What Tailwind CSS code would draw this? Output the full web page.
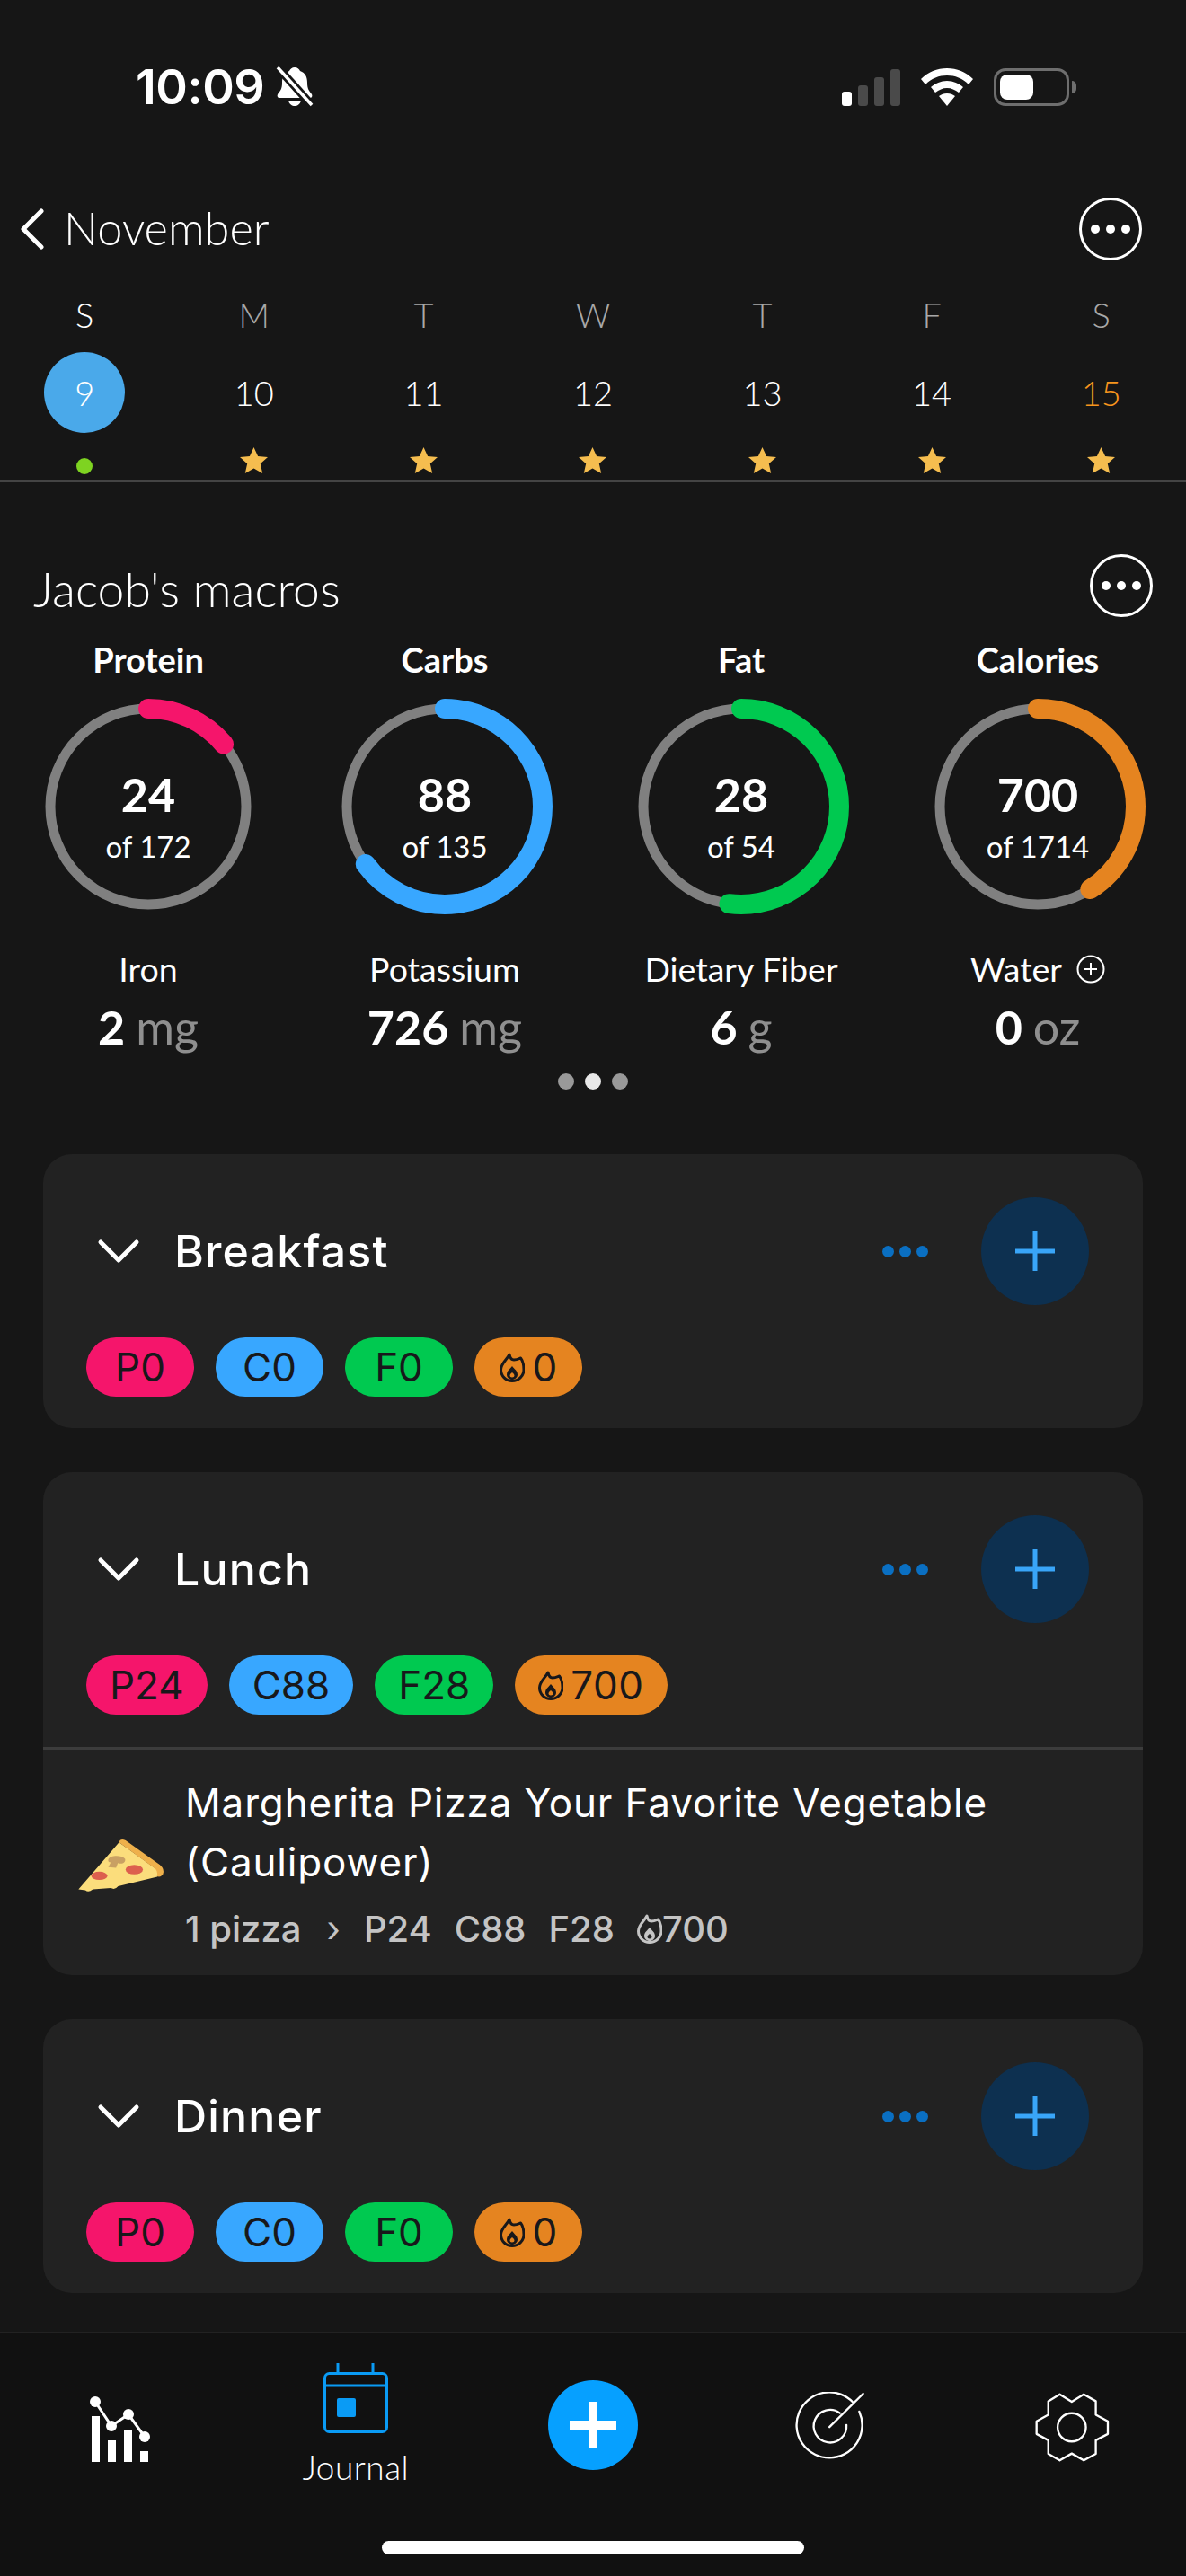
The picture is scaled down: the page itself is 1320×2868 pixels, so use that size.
<!DOCTYPE html>
<html lang="en">
  <head>
    <meta charset="UTF-8" />
    <meta name="viewport" content="width=device-width, initial-scale=1.0" />
    <script src="https://cdn.jsdelivr.net/npm/@tailwindcss/browser@4"></script>
    <title>Journal</title>
  </head>
  <body class="bg-[#161616]">
    <div class="w-[1320px] h-[2868px] flex flex-col bg-[#161616] text-white font-['Lato',sans-serif] overflow-hidden">
      <!-- Status bar -->
      <div class="h-[194px] shrink-0 flex items-center justify-between pl-[151px] pr-[122px]">
        <div class="flex items-center gap-[13px]">
          <span class="font-['Inter',sans-serif] font-semibold text-[54px] leading-none tracking-[-0.5px]">10:09</span>
          <svg class="w-[42px] h-[46px]" viewBox="0 0 42 46">
            <path d="M21 1c3 0 5 2 6 4 6 2 8 7 8 13 0 7 2 9 5 13 1 2 0 4-2 4H4c-2 0-3-2-2-4 3-4 5-6 5-13 0-6 2-11 8-13 1-2 3-4 6-4z" fill="#fff" />
            <path d="M14 38h14c-1 4-4 6-7 6s-6-2-7-6z" fill="#fff" />
            <path d="M3 2l36 40" stroke="#161616" stroke-width="9" />
            <path d="M2 1l38 42" stroke="#fff" stroke-width="3.5" />
          </svg>
        </div>
        <div class="flex items-center gap-[23px]">
          <div class="flex items-end gap-[7px] h-[41px]">
            <div class="w-[11px] h-[16px] rounded-[3px] bg-white"></div>
            <div class="w-[11px] h-[23px] rounded-[3px] bg-[#4a4a4a]"></div>
            <div class="w-[11px] h-[32px] rounded-[3px] bg-[#4a4a4a]"></div>
            <div class="w-[11px] h-[41px] rounded-[3px] bg-[#4a4a4a]"></div>
          </div>
          <svg class="w-[58px] h-[42px]" viewBox="0 0 58 42">
            <path d="M29 0c11 0 21 4 29 12l-5 6C46 11 38 8 29 8S12 11 5 18l-5-6C8 4 18 0 29 0z" fill="#fff" />
            <path d="M29 14c7 0 13 3 18 7l-5 6c-4-3-8-5-13-5s-9 2-13 5l-5-6c5-4 11-7 18-7z" fill="#fff" />
            <path d="M29 28c4 0 6 1 9 3L29 42 20 31c3-2 5-3 9-3z" fill="#fff" />
          </svg>
          <div class="flex items-center gap-[3px]">
            <div class="w-[84px] h-[42px] rounded-[13px] border-[3px] border-[#6e6e6e] p-[4px]">
              <div class="w-[37px] h-full rounded-[8px] bg-white"></div>
            </div>
            <div class="w-[5px] h-[14px] rounded-r-full bg-[#6e6e6e]"></div>
          </div>
        </div>
      </div>

      <!-- Month header -->
      <div class="h-[122px] shrink-0 flex items-center justify-between pl-[22px] pr-[49px]">
        <div class="flex items-center gap-[22px]">
          <svg class="w-[27px] h-[46px]" viewBox="0 0 27 46" fill="none" stroke="#fff" stroke-width="5" stroke-linecap="round" stroke-linejoin="round">
            <path d="M24 3L4 23l20 20" />
          </svg>
          <span class="font-light text-[50.5px] leading-none mb-[2px]">November</span>
        </div>
        <svg class="w-[70px] h-[70px]" viewBox="0 0 70 70">
          <circle cx="35" cy="35" r="33.5" fill="none" stroke="#fff" stroke-width="3" />
          <circle cx="18" cy="35" r="5" fill="#fff" /><circle cx="35" cy="35" r="5" fill="#fff" /><circle cx="52" cy="35" r="5" fill="#fff" />
        </svg>
      </div>

      <!-- Week strip -->
      <div class="grid grid-cols-7 h-[68px] shrink-0 items-center text-center text-[38px] font-light text-[#a8a8a8]">
        <span class="text-white">S</span><span>M</span><span>T</span><span>W</span><span>T</span><span>F</span><span>S</span>
      </div>
      <div class="grid grid-cols-7 h-[106px] shrink-0 items-center justify-items-center text-[38px] font-light">
        <div class="w-[90px] h-[90px] rounded-full bg-[#4aa9ea] flex items-center justify-center">9</div>
        <span>10</span><span>11</span><span>12</span><span>13</span><span>14</span><span class="text-[#f7951d]">15</span>
      </div>
      <div class="grid grid-cols-7 h-[44px] shrink-0 items-center justify-items-center">
        <div class="w-[18px] h-[18px] mt-[14px] rounded-full bg-[#7ed321]"></div>
        <svg class="w-[31px] h-[29px]" viewBox="0 0 31 29"><path d="M15.5 0l4.6 10 10.9 1.1-8.2 7.2 2.4 10.7-9.7-5.6L5.8 29l2.4-10.7L0 11.1 10.9 10z" fill="#f5bd4f" /></svg>
        <svg class="w-[31px] h-[29px]" viewBox="0 0 31 29"><path d="M15.5 0l4.6 10 10.9 1.1-8.2 7.2 2.4 10.7-9.7-5.6L5.8 29l2.4-10.7L0 11.1 10.9 10z" fill="#f5bd4f" /></svg>
        <svg class="w-[31px] h-[29px]" viewBox="0 0 31 29"><path d="M15.5 0l4.6 10 10.9 1.1-8.2 7.2 2.4 10.7-9.7-5.6L5.8 29l2.4-10.7L0 11.1 10.9 10z" fill="#f5bd4f" /></svg>
        <svg class="w-[31px] h-[29px]" viewBox="0 0 31 29"><path d="M15.5 0l4.6 10 10.9 1.1-8.2 7.2 2.4 10.7-9.7-5.6L5.8 29l2.4-10.7L0 11.1 10.9 10z" fill="#f5bd4f" /></svg>
        <svg class="w-[31px] h-[29px]" viewBox="0 0 31 29"><path d="M15.5 0l4.6 10 10.9 1.1-8.2 7.2 2.4 10.7-9.7-5.6L5.8 29l2.4-10.7L0 11.1 10.9 10z" fill="#f5bd4f" /></svg>
        <svg class="w-[31px] h-[29px]" viewBox="0 0 31 29"><path d="M15.5 0l4.6 10 10.9 1.1-8.2 7.2 2.4 10.7-9.7-5.6L5.8 29l2.4-10.7L0 11.1 10.9 10z" fill="#f5bd4f" /></svg>
      </div>
      <div class="h-[3px] shrink-0 bg-[#444444]"></div>

      <!-- Macros -->
      <div class="h-[90px] mt-[75px] shrink-0 flex items-center justify-between pl-[37px] pr-[37px]">
        <span class="font-light text-[53.5px] leading-none mb-[2px]">Jacob's macros</span>
        <svg class="w-[70px] h-[70px] mb-[10px]" viewBox="0 0 70 70">
          <circle cx="35" cy="35" r="33.5" fill="none" stroke="#fff" stroke-width="3" />
          <circle cx="18" cy="35" r="5" fill="#fff" /><circle cx="35" cy="35" r="5" fill="#fff" /><circle cx="52" cy="35" r="5" fill="#fff" />
        </svg>
      </div>

      <div class="grid grid-cols-4 mt-[8px] shrink-0 text-center">
        <div class="flex flex-col items-center">
          <div class="h-[48px] mb-[2px] flex items-center font-bold text-[38px] leading-none">Protein</div>
          <div class="relative w-[240px] h-[240px] mt-[18px]">
            <svg class="w-full h-full -rotate-90" viewBox="0 0 240 240" fill="none">
              <circle cx="120" cy="120" r="109" stroke="#808080" stroke-width="11" />
              <circle cx="120" cy="120" r="109" stroke="#f5156b" stroke-width="22" stroke-linecap="round" pathLength="100" stroke-dasharray="14 100" />
            </svg>
            <div class="absolute inset-0 flex flex-col items-center pt-[81px]">
              <span class="font-bold text-[52px] leading-[50px]">24</span>
              <span class="text-[33px] leading-[40px] mt-[13px]">of 172</span>
            </div>
          </div>
          <div class="h-[44px] mt-[39px] flex items-center text-[37.5px] leading-none">Iron</div>
          <div class="h-[60px] mt-[12px] flex items-baseline gap-[12px] text-[52px] leading-[60px]"><span class="font-bold">2</span><span class="text-[#8f8f8f]">mg</span></div>
        </div>
        <div class="flex flex-col items-center">
          <div class="h-[48px] mb-[2px] flex items-center font-bold text-[38px] leading-none">Carbs</div>
          <div class="relative w-[240px] h-[240px] mt-[18px]">
            <svg class="w-full h-full -rotate-90" viewBox="0 0 240 240" fill="none">
              <circle cx="120" cy="120" r="109" stroke="#808080" stroke-width="11" />
              <circle cx="120" cy="120" r="109" stroke="#38a7ff" stroke-width="22" stroke-linecap="round" pathLength="100" stroke-dasharray="65 100" />
            </svg>
            <div class="absolute inset-0 flex flex-col items-center pt-[81px]">
              <span class="font-bold text-[52px] leading-[50px]">88</span>
              <span class="text-[33px] leading-[40px] mt-[13px]">of 135</span>
            </div>
          </div>
          <div class="h-[44px] mt-[39px] flex items-center text-[37.5px] leading-none">Potassium</div>
          <div class="h-[60px] mt-[12px] flex items-baseline gap-[12px] text-[52px] leading-[60px]"><span class="font-bold">726</span><span class="text-[#8f8f8f]">mg</span></div>
        </div>
        <div class="flex flex-col items-center">
          <div class="h-[48px] mb-[2px] flex items-center font-bold text-[38px] leading-none">Fat</div>
          <div class="relative w-[240px] h-[240px] mt-[18px]">
            <svg class="w-full h-full -rotate-90" viewBox="0 0 240 240" fill="none">
              <circle cx="120" cy="120" r="109" stroke="#808080" stroke-width="11" />
              <circle cx="120" cy="120" r="109" stroke="#00c950" stroke-width="22" stroke-linecap="round" pathLength="100" stroke-dasharray="52 100" />
            </svg>
            <div class="absolute inset-0 flex flex-col items-center pt-[81px]">
              <span class="font-bold text-[52px] leading-[50px]">28</span>
              <span class="text-[33px] leading-[40px] mt-[13px]">of 54</span>
            </div>
          </div>
          <div class="h-[44px] mt-[39px] flex items-center text-[37.5px] leading-none">Dietary Fiber</div>
          <div class="h-[60px] mt-[12px] flex items-baseline gap-[12px] text-[52px] leading-[60px]"><span class="font-bold">6</span><span class="text-[#8f8f8f]">g</span></div>
        </div>
        <div class="flex flex-col items-center">
          <div class="h-[48px] mb-[2px] flex items-center font-bold text-[38px] leading-none">Calories</div>
          <div class="relative w-[240px] h-[240px] mt-[18px]">
            <svg class="w-full h-full -rotate-90" viewBox="0 0 240 240" fill="none">
              <circle cx="120" cy="120" r="109" stroke="#808080" stroke-width="11" />
              <circle cx="120" cy="120" r="109" stroke="#e58420" stroke-width="22" stroke-linecap="round" pathLength="100" stroke-dasharray="41 100" />
            </svg>
            <div class="absolute inset-0 flex flex-col items-center pt-[81px]">
              <span class="font-bold text-[52px] leading-[50px]">700</span>
              <span class="text-[33px] leading-[40px] mt-[13px]">of 1714</span>
            </div>
          </div>
          <div class="h-[44px] mt-[39px] flex items-center gap-[16px] text-[37.5px] leading-none">Water
            <svg class="w-[32px] h-[32px]" viewBox="0 0 32 32" fill="none" stroke="#fff" stroke-width="2"><circle cx="16" cy="16" r="14.5" /><path d="M16 9v14M9 16h14" /></svg>
          </div>
          <div class="h-[60px] mt-[12px] flex items-baseline gap-[12px] text-[52px] leading-[60px]"><span class="font-bold">0</span><span class="text-[#8f8f8f]">oz</span></div>
        </div>
      </div>

      <div class="flex justify-center gap-[12px] mt-[22px] shrink-0">
        <div class="w-[18px] h-[18px] rounded-full bg-[#999999]"></div>
        <div class="w-[18px] h-[18px] rounded-full bg-[#e8e8e8]"></div>
        <div class="w-[18px] h-[18px] rounded-full bg-[#999999]"></div>
      </div>

      <!-- Meals -->
      <div class="flex flex-col gap-[49px] mx-[48px] mt-[72px] shrink-0 font-['Inter',sans-serif] text-[#18181b]">
        <div class="bg-[#222222] rounded-[32px] h-[305px] pt-[48px]">
          <div class="flex items-center h-[120px] pl-[60px] pr-[60px]">
            <svg class="w-[48px] h-[30px]" viewBox="0 0 48 30" fill="none" stroke="#fff" stroke-width="5" stroke-linecap="round" stroke-linejoin="round"><path d="M4 5l20 20L44 5" /></svg>
            <span class="ml-[38px] text-white font-medium text-[50px] leading-none tracking-[1.2px]">Breakfast</span>
            <div class="ml-auto flex gap-[6px]"><div class="w-[13px] h-[13px] rounded-full bg-[#0a6fc2]"></div><div class="w-[13px] h-[13px] rounded-full bg-[#0a6fc2]"></div><div class="w-[13px] h-[13px] rounded-full bg-[#0a6fc2]"></div></div>
            <div class="ml-[59px] w-[120px] h-[120px] rounded-full bg-[#0d3050] flex items-center justify-center">
              <svg class="w-[44px] h-[44px]" viewBox="0 0 44 44" stroke="#39a5f8" stroke-width="5"><path d="M22 0v44M0 22h44" /></svg>
            </div>
          </div>
          <div class="flex gap-[24px] pl-[48px] mt-[36px] text-[44px] leading-none">
            <div class="h-[66px] min-w-[120px] px-[26px] rounded-full bg-[#f5156b] flex items-center justify-center">P0</div>
            <div class="h-[66px] min-w-[120px] px-[26px] rounded-full bg-[#38a7ff] flex items-center justify-center">C0</div>
            <div class="h-[66px] min-w-[120px] px-[26px] rounded-full bg-[#00c950] flex items-center justify-center">F0</div>
            <div class="h-[66px] min-w-[120px] px-[26px] rounded-full bg-[#e58420] flex items-center justify-center gap-[9px]">
              <svg class="w-[28px] h-[33px]" viewBox="0 0 28 33" fill="none" stroke="#18181b" stroke-width="3" stroke-linejoin="round"><path d="M11 2c.5 3 2 6 5 6 3 0 5-1 7.500-2 2.500 3 3.500 8 3.500 13 0 7-6 12.500-13 12.500S1.500 26 1.500 19C1.500 12 8 8 11 2z" /><path d="M14 15c2 3 6 5 6 9.500 0 3-3 5.500-6 5.500s-6-2.500-6-5.500c0-4.500 4-6.500 6-9.500z" fill="#18181b" stroke="none" /><path d="M14 22c1 1 2.500 2 2.500 3.500 0 1-1 2-2.500 2s-2.500-1-2.500-2c0-1.500 1.500-2.500 2.500-3.500z" fill="#e58420" stroke="none" /></svg>
              <span>0</span>
            </div>
          </div>
        </div>

        <div class="bg-[#222222] rounded-[32px] h-[560px] pt-[48px]">
          <div class="flex items-center h-[120px] pl-[60px] pr-[60px]">
            <svg class="w-[48px] h-[30px]" viewBox="0 0 48 30" fill="none" stroke="#fff" stroke-width="5" stroke-linecap="round" stroke-linejoin="round"><path d="M4 5l20 20L44 5" /></svg>
            <span class="ml-[38px] text-white font-medium text-[50px] leading-none tracking-[1.2px]">Lunch</span>
            <div class="ml-auto flex gap-[6px]"><div class="w-[13px] h-[13px] rounded-full bg-[#0a6fc2]"></div><div class="w-[13px] h-[13px] rounded-full bg-[#0a6fc2]"></div><div class="w-[13px] h-[13px] rounded-full bg-[#0a6fc2]"></div></div>
            <div class="ml-[59px] w-[120px] h-[120px] rounded-full bg-[#0d3050] flex items-center justify-center">
              <svg class="w-[44px] h-[44px]" viewBox="0 0 44 44" stroke="#39a5f8" stroke-width="5"><path d="M22 0v44M0 22h44" /></svg>
            </div>
          </div>
          <div class="flex gap-[24px] pl-[48px] mt-[36px] text-[44px] leading-none">
            <div class="h-[66px] min-w-[120px] px-[26px] rounded-full bg-[#f5156b] flex items-center justify-center">P24</div>
            <div class="h-[66px] min-w-[120px] px-[26px] rounded-full bg-[#38a7ff] flex items-center justify-center">C88</div>
            <div class="h-[66px] min-w-[120px] px-[26px] rounded-full bg-[#00c950] flex items-center justify-center">F28</div>
            <div class="h-[66px] min-w-[120px] px-[26px] rounded-full bg-[#e58420] flex items-center justify-center gap-[8px] tracking-[0.5px]">
              <svg class="w-[28px] h-[33px]" viewBox="0 0 28 33" fill="none" stroke="#18181b" stroke-width="3" stroke-linejoin="round"><path d="M11 2c.5 3 2 6 5 6 3 0 5-1 7.500-2 2.500 3 3.500 8 3.500 13 0 7-6 12.500-13 12.500S1.500 26 1.500 19C1.500 12 8 8 11 2z" /><path d="M14 15c2 3 6 5 6 9.500 0 3-3 5.500-6 5.500s-6-2.500-6-5.500c0-4.500 4-6.500 6-9.500z" fill="#18181b" stroke="none" /><path d="M14 22c1 1 2.500 2 2.500 3.500 0 1-1 2-2.500 2s-2.500-1-2.500-2c0-1.500 1.500-2.500 2.500-3.500z" fill="#e58420" stroke="none" /></svg>
              <span>700</span>
            </div>
          </div>
          <div class="h-[3px] mt-[36px] bg-[#3c3c3c]"></div>
          <div class="flex items-center pl-[38px] h-[253px]">
            <svg class="w-[98px] h-[62px] shrink-0 mt-[4px]" viewBox="78 190 295 185">
              <path d="M82 362L218 205 350 300Q355 322 340 322L215 352Q205 365 190 358L130 362Q115 375 105 365z" fill="#fbdd7c" />
              <path d="M218 205Q222 190 240 198L355 280Q372 295 365 312 355 325 345 318 350 300 335 290z" fill="#eeb04b" />
              <ellipse cx="152" cy="317" rx="27" ry="14" fill="#dc5f4e" />
              <ellipse cx="269" cy="296" rx="29" ry="16" fill="#dc5f4e" />
              <path d="M182 262C186 248 225 245 238 260 242 272 228 280 214 274L208 290 182 288 190 272C184 272 180 268 182 262z" fill="#c9a063" />
            </svg>
            <div class="ml-[22px] mt-[-8px] flex flex-col">
              <div class="text-white text-[44px] leading-[66px] w-[1000px] tracking-[0.85px]">Margherita Pizza Your Favorite Vegetable<br />(Caulipower)</div>
              <div class="flex items-center text-[#c4c4c4] text-[40px] leading-none mt-[22px] font-medium">
                <span>1 pizza</span>
                <span class="ml-[28px] font-normal">›</span>
                <span class="ml-[26px]">P24</span>
                <span class="ml-[25px]">C88</span>
                <span class="ml-[25px]">F28</span>
                <svg class="ml-[25px] w-[28px] h-[33px]" viewBox="0 0 28 33" fill="none" stroke="#c4c4c4" stroke-width="3" stroke-linejoin="round"><path d="M11 2c.5 3 2 6 5 6 3 0 5-1 7.500-2 2.500 3 3.500 8 3.500 13 0 7-6 12.500-13 12.500S1.500 26 1.500 19C1.500 12 8 8 11 2z" /><path d="M14 15c2 3 6 5 6 9.500 0 3-3 5.500-6 5.500s-6-2.500-6-5.500c0-4.500 4-6.500 6-9.500z" fill="#c4c4c4" stroke="none" /><path d="M14 22c1 1 2.500 2 2.500 3.500 0 1-1 2-2.500 2s-2.500-1-2.500-2c0-1.500 1.500-2.500 2.500-3.500z" fill="#222222" stroke="none" /></svg>
                <span>700</span>
              </div>
            </div>
          </div>
        </div>

        <div class="bg-[#222222] rounded-[32px] h-[305px] pt-[48px]">
          <div class="flex items-center h-[120px] pl-[60px] pr-[60px]">
            <svg class="w-[48px] h-[30px]" viewBox="0 0 48 30" fill="none" stroke="#fff" stroke-width="5" stroke-linecap="round" stroke-linejoin="round"><path d="M4 5l20 20L44 5" /></svg>
            <span class="ml-[38px] text-white font-medium text-[50px] leading-none tracking-[1.2px]">Dinner</span>
            <div class="ml-auto flex gap-[6px]"><div class="w-[13px] h-[13px] rounded-full bg-[#0a6fc2]"></div><div class="w-[13px] h-[13px] rounded-full bg-[#0a6fc2]"></div><div class="w-[13px] h-[13px] rounded-full bg-[#0a6fc2]"></div></div>
            <div class="ml-[59px] w-[120px] h-[120px] rounded-full bg-[#0d3050] flex items-center justify-center">
              <svg class="w-[44px] h-[44px]" viewBox="0 0 44 44" stroke="#39a5f8" stroke-width="5"><path d="M22 0v44M0 22h44" /></svg>
            </div>
          </div>
          <div class="flex gap-[24px] pl-[48px] mt-[36px] text-[44px] leading-none">
            <div class="h-[66px] min-w-[120px] px-[26px] rounded-full bg-[#f5156b] flex items-center justify-center">P0</div>
            <div class="h-[66px] min-w-[120px] px-[26px] rounded-full bg-[#38a7ff] flex items-center justify-center">C0</div>
            <div class="h-[66px] min-w-[120px] px-[26px] rounded-full bg-[#00c950] flex items-center justify-center">F0</div>
            <div class="h-[66px] min-w-[120px] px-[26px] rounded-full bg-[#e58420] flex items-center justify-center gap-[9px]">
              <svg class="w-[28px] h-[33px]" viewBox="0 0 28 33" fill="none" stroke="#18181b" stroke-width="3" stroke-linejoin="round"><path d="M11 2c.5 3 2 6 5 6 3 0 5-1 7.500-2 2.500 3 3.500 8 3.500 13 0 7-6 12.500-13 12.500S1.500 26 1.500 19C1.500 12 8 8 11 2z" /><path d="M14 15c2 3 6 5 6 9.500 0 3-3 5.500-6 5.500s-6-2.500-6-5.500c0-4.500 4-6.500 6-9.500z" fill="#18181b" stroke="none" /><path d="M14 22c1 1 2.500 2 2.500 3.500 0 1-1 2-2.500 2s-2.500-1-2.500-2c0-1.500 1.500-2.500 2.500-3.500z" fill="#e58420" stroke="none" /></svg>
              <span>0</span>
            </div>
          </div>
        </div>
      </div>

      <!-- Tab bar -->
      <div class="mt-auto h-[272px] shrink-0 bg-[#111111] border-t-2 border-[#222222] flex flex-col">
        <div class="grid grid-cols-[264px_264px_264px_264px_264px] h-[232px]">
          <div class="flex justify-center pt-[68px]">
            <svg class="w-[72px] h-[80px] ml-[4px]" viewBox="0 0 72 80" fill="#fff">
              <rect x="4" y="24" width="9" height="51" /><rect x="22" y="51" width="9" height="24" /><rect x="40" y="39" width="9" height="36" /><rect x="58" y="63" width="9" height="12" />
              <path d="M8 8l18 27 19-13 18 25" fill="none" stroke="#fff" stroke-width="3" />
              <circle cx="8" cy="8" r="6" /><circle cx="26" cy="35" r="6" /><circle cx="45" cy="22" r="6" /><circle cx="63" cy="47" r="6" />
            </svg>
          </div>
          <div class="flex flex-col items-center pt-[33px]">
            <svg class="w-[72px] h-[78px]" viewBox="0 0 72 78" fill="none" stroke="#0a9bf5" stroke-width="3">
              <rect x="1.500" y="11.500" width="69" height="65" rx="5" /><path d="M1 25h70M16 0v11M55 0v11" />
              <rect x="15" y="39" width="21" height="21" rx="2" fill="#0a9bf5" stroke="none" />
            </svg>
            <span class="font-light text-[37px] leading-none mt-[19px] tracking-[0.5px]">Journal</span>
          </div>
          <div class="flex justify-center pt-[52px]">
            <div class="w-[100px] h-[100px] rounded-full bg-[#06a0ff] flex items-center justify-center">
              <svg class="w-[52px] h-[52px]" viewBox="0 0 52 52" stroke="#fff" stroke-width="10"><path d="M26 0v52M0 26h52" /></svg>
            </div>
          </div>
          <div class="flex justify-center pt-[65px]">
            <svg class="w-[78px] h-[77px]" viewBox="40 50 235 230" fill="none" stroke="#fff" stroke-width="7" stroke-linecap="round">
              <path d="M235 85A110 110 0 1 0 255 115" /><path d="M190 120A55 55 0 1 0 212 160" /><path d="M155 167L268 55" />
            </svg>
          </div>
          <div class="flex justify-center pt-[66px]">
            <svg class="w-[83px] h-[77px] ml-[10px]" viewBox="840 55 248 230" fill="none" stroke="#fff" stroke-width="7" stroke-linejoin="round">
              <path d="M922 60L962 85 1002 60 1042 83V128L1082 150V192L1042 213V258L1002 280 962 257 922 280 884 258V213L845 192V150L884 128V83z" /><circle cx="962" cy="170" r="47" />
            </svg>
          </div>
        </div>
        <div class="w-[470px] h-[15px] rounded-full bg-white mx-auto mt-[-1px]"></div>
      </div>
    </div>
  </body>
</html>
